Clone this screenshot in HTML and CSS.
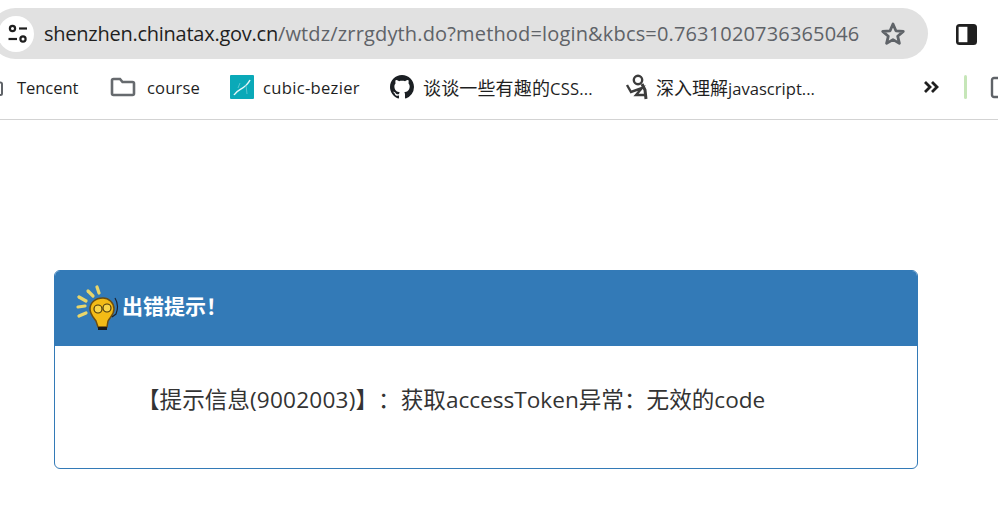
FILE: index.html
```html
<!DOCTYPE html>
<html lang="zh-CN">
<head>
<meta charset="utf-8">
<title>出错提示</title>
<link rel="stylesheet" href="styles.css">
</head>
<body>
<header class="chrome">
  <div class="toolbar">
    <div class="omnibox">
      <span class="site-btn">
        <svg width="24" height="24" viewBox="0 0 24 24" fill="none" stroke="#1f1f1f" stroke-width="2.200"><circle cx="6.500" cy="6.500" r="2.600"/><path d="M13 6.500h8"/><path d="M2.500 17h8.500"/><circle cx="17" cy="17" r="2.600"/></svg>
      </span>
      <span class="url"><span class="host">shenzhen.chinatax.gov.cn</span><span class="path">/wtdz/zrrgdyth.do?method=login&amp;kbcs=0.7631020736365046</span></span>
      <svg class="star" width="26" height="26" viewBox="0 0 26 26" fill="none" stroke="#5f6368" stroke-width="2.800" stroke-linejoin="round"><path d="M13 3l2.900 6.800 7.400.6-5.600 4.800 1.700 7.200L13 18.600l-6.400 3.800 1.700-7.200-5.600-4.800 7.400-.6z"/></svg>
    </div>
    <svg class="panel" width="24" height="24" viewBox="0 0 24 24"><rect x="2" y="2" width="21" height="21" rx="3.500" fill="#1f1f1f"/><rect x="4.600" y="4.800" width="8.800" height="15.400" fill="#fff"/></svg>
  </div>
  <nav class="bookmarks">
    <span class="bm bm-tencent">
      <svg width="24" height="24" viewBox="0 0 24 24" fill="none" stroke="#5f6368" stroke-width="2"><path d="M3 6.500a1.500 1.500 0 0 1 1.500-1.500H10l2 2.400h7.500A1.500 1.500 0 0 1 21 9v9.500a1.500 1.500 0 0 1-1.500 1.500h-15A1.500 1.500 0 0 1 3 18.500z"/></svg>
      <span class="label-tencent">Tencent</span>
    </span>
    <span class="bm bm-course">
      <svg width="26" height="24" viewBox="0 0 26 24" fill="none" stroke="#666a6e" stroke-width="2.600"><path d="M2 5.500A1.500 1.500 0 0 1 3.500 4H10l2.500 3h10A1.500 1.500 0 0 1 24 8.500v10a1.500 1.500 0 0 1-1.500 1.500h-19A1.500 1.500 0 0 1 2 18.500z"/></svg>
      <span class="label-course">course</span>
    </span>
    <span class="bm bm-cubic">
      <svg width="24" height="24" viewBox="0 0 24 24"><rect width="24" height="24" rx="1" fill="#0aa9b8"/><path d="M4 20C8 13 15 15 20 5" fill="none" stroke="#e6f7f8" stroke-width="1.500"/><path d="M8 13L10 8M17 19l-1-9" fill="none" stroke="#6cccd5" stroke-width="0.800"/></svg>
      <span class="label-cubic">cubic-bezier</span>
    </span>
    <span class="bm bm-github">
      <svg width="24" height="24" viewBox="0 0 16 16"><path fill="#1b1f23" d="M8 0C3.580 0 0 3.580 0 8c0 3.540 2.290 6.530 5.470 7.590.4.070.55-.17.55-.38 0-.19-.01-.82-.01-1.490-2.010.37-2.530-.49-2.690-.94-.09-.23-.48-.94-.82-1.130-.28-.15-.68-.52-.01-.53.630-.01 1.080.58 1.230.82.720 1.210 1.870.87 2.330.66.070-.52.280-.87.510-1.070-1.780-.2-3.640-.89-3.640-3.950 0-.87.310-1.590.820-2.150-.08-.2-.36-1.020.08-2.120 0 0 .67-.21 2.200.82.640-.18 1.320-.27 2-.27s1.360.09 2 .27c1.530-1.040 2.200-.82 2.200-.82.440 1.100.16 1.920.08 2.120.51.560.82 1.270.82 2.150 0 3.070-1.870 3.750-3.650 3.950.29.250.54.730.54 1.480 0 1.070-.01 1.930-.01 2.200 0 .21.150.46.550.38A8.010 8.010 0 0 0 16 8c0-4.420-3.580-8-8-8z"/></svg>
      <span class="label-github"><span class="cjk">谈谈一些有趣的</span>CSS...</span>
    </span>
    <span class="bm bm-deep">
      <svg width="24" height="26" viewBox="0 0 24 26" fill="none" stroke="#3c3c3c" stroke-width="2.400"><circle cx="13" cy="6" r="4.200"/><path d="M2 11l4 7 11-4-6 7h9"/><path d="M17 10l3 6 1 9" stroke-width="3"/></svg>
      <span><span class="cjk">深入理解</span>javascript...</span>
    </span>
    <span class="more">
      <svg width="16" height="14" viewBox="0 0 16 14" fill="none" stroke="#1f1f1f" stroke-width="2.800"><path d="M2 2l5 5-5 5M9 2l5 5-5 5"/></svg>
    </span>
    <span class="tick"></span>
    <svg class="clipped" width="24" height="24" viewBox="0 0 24 24" fill="none" stroke="#5f6368" stroke-width="2.400"><rect x="2" y="3" width="20" height="19" rx="2"/></svg>
  </nav>
</header>
<main class="page">
  <section class="card">
    <div class="card-head">
      <svg class="bulb" width="44" height="48" viewBox="0 0 44 48">
        <g stroke="#e9d66b" stroke-width="3.200" stroke-linecap="round">
          <path d="M21 2l2 6"/><path d="M12 6l5 5"/><path d="M3 12l7 4"/><path d="M2 22l7-1"/><path d="M3 31l7-3"/>
        </g>
        <path d="M27 13c-8 0-13 5-13 11 0 5 3 8 6 12l2 6h9l1-6c2-4 6-6 6-12 0-6-5-11-11-11z" fill="#f3bb16" stroke="#6b4e12" stroke-width="1.500"/>
        <path d="M22 42h9v3h-9z" fill="#1a1a1a"/>
        <circle cx="22" cy="24" r="4" fill="#f9d64a" stroke="#4a3a10" stroke-width="1.200"/>
        <circle cx="31" cy="23" r="4" fill="#f9d64a" stroke="#4a3a10" stroke-width="1.200"/>
        <path d="M39 13c3 5 3 11 1 16l-4 3" fill="none" stroke="#1a2230" stroke-width="1.200"/>
      </svg>
      <h1 class="title">出错提示！</h1>
    </div>
    <p class="message">【提示信息<span class="num">(9002003)</span>】：获取<span class="latin">accessToken</span>异常：无效的<span class="latin">code</span></p>
  </section>
</main>
</body>
</html>
```

FILE: styles.css
```css
* { box-sizing: border-box; }
html, body { margin: 0; height: 100%; }
body {
  width: 998px;
  height: 524px;
  overflow: hidden;
  background: #fff;
  color: #1f1f1f;
  font-family: "Open Sans", "Noto Sans CJK SC", sans-serif;
  text-spacing-trim: space-all;
}
.chrome { border-bottom: 1px solid #d3d3d3; height: 120px; }
.toolbar { display: flex; align-items: center; height: 67px; padding-top: 8px; padding-bottom: 8px; }
.omnibox {
  display: flex;
  align-items: center;
  flex: none;
  width: 938px;
  height: 51px;
  margin-left: -10px;
  padding-left: 8px;
  border-radius: 26px;
  background: #e1e1e1;
}
.site-btn {
  display: flex;
  align-items: center;
  justify-content: center;
  flex: none;
  width: 36px;
  height: 36px;
  border-radius: 50%;
  background: #fff;
}
.site-btn svg { margin-left: 4px; }
.url { margin-left: 10px; font-size: 20px; white-space: nowrap; width: 815px; flex: none; }
.host { color: #1f1f1f; letter-spacing: -0.25px; }
.path { color: #5f6368; letter-spacing: 0.16px; }
.star { margin-left: 21px; flex: none; }
.panel { margin-left: 26px; flex: none; }
.bookmarks { display: flex; align-items: center; height: 44px; margin-top: -2px; font-size: 16.600px; white-space: nowrap; }
.bm { display: flex; align-items: center; flex: none; }
.cjk { font-size: 18px; }
.bm-tencent { margin-left: -19px; gap: 12px; width: 129px; }
.label-tencent { letter-spacing: -0.1px; }
.bm-course { gap: 11px; width: 120px; }
.label-course { letter-spacing: 0.15px; }
.bm-cubic { gap: 9px; width: 160px; }
.label-cubic { letter-spacing: 0.3px; }
.bm-github { gap: 9px; width: 235px; }
.label-github { letter-spacing: 0.15px; }
.bm-deep { gap: 7px; width: 298px; }
.more { flex: none; display: flex; }
.tick { flex: none; width: 3px; height: 24px; margin-left: 25px; border-radius: 2px; background: #c6e6b8; }
.clipped { flex: none; margin-left: 23px; }
.page { padding: 150px 80px 0 54px; }
.card { height: 199px; border: 1px solid #337ab7; border-radius: 6px; background: #fff; overflow: hidden; }
.card-head { display: flex; align-items: center; height: 75px; padding: 0 0 4px 21px; background: #337ab7; }
.bulb { flex: none; margin-top: 4px; }
.title { margin: 0 0 4px 2px; color: #fff; font-size: 21px; font-weight: 700; }
.message { margin: 0; padding: 38px 0 0 82px; font-size: 22.600px; line-height: 32px; color: #333; white-space: nowrap; }
.num { letter-spacing: 0.2px; }
.latin { letter-spacing: 0; }
```
